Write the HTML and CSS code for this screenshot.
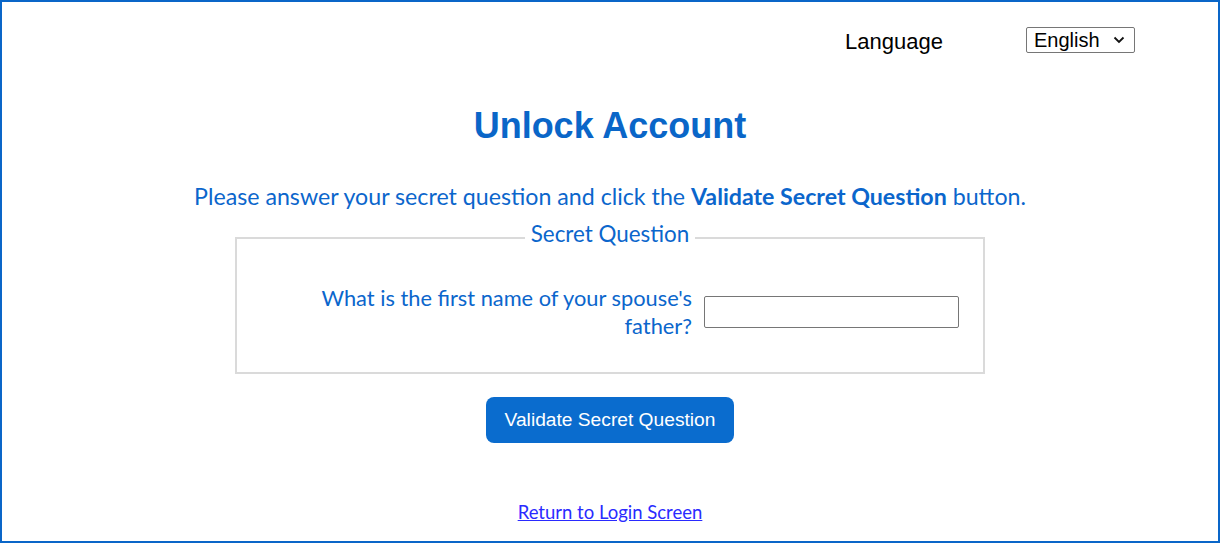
FILE: index.html
```html
<!DOCTYPE html>
<html>
<head>
<meta charset="utf-8">
<link rel="stylesheet" href="styles.css">
</head>
<body>
<div class="page">
  <div class="lang-row">
    <span class="lang-label">Language</span>
    <div class="select-wrap">
      <select class="lang-select"><option>English</option></select>
      <svg class="chev" width="12" height="8" viewBox="0 0 12 8"><path d="M1.5 1.5 L6 6 L10.5 1.5" fill="none" stroke="#111" stroke-width="1.8"/></svg>
    </div>
  </div>
  <h1 class="title">Unlock Account</h1>
  <p class="intro">Please answer your secret question and click the <b>Validate Secret Question</b> button.</p>
  <fieldset class="sq">
    <legend class="sq-legend">Secret Question</legend>
    <div class="sq-row">
      <label class="sq-label" for="ans">What is the first name of your spouse's father?</label>
      <input id="ans" class="sq-input" type="text">
    </div>
  </fieldset>
  <div class="btn-row"><button class="btn">Validate Secret Question</button></div>
  <div class="link-row"><a class="back" href="#">Return to Login Screen</a></div>
</div>
</body>
</html>
```
FILE: styles.css
```css
html, body { margin: 0; padding: 0; background: #fff; }
.page {
  box-sizing: border-box;
  width: 1220px;
  height: 543px;
  border: 2px solid #0a66c8;
  font-family: Lato, "Open Sans", sans-serif;
  color: #0b66cc;
  overflow: hidden;
}
.lang-row {
  display: flex;
  justify-content: flex-end;
  align-items: flex-start;
  gap: 83px;
  padding: 25px 83px 0 0;
  height: 26px;
}
.lang-label {
  font-family: "Liberation Sans", Arial, sans-serif;
  font-size: 22px;
  line-height: 26px;
  color: #000;
  margin-top: 2px;
}
.select-wrap { position: relative; width: 109px; height: 26px; }
.lang-select {
  -webkit-appearance: none;
  appearance: none;
  box-sizing: border-box;
  width: 109px;
  height: 26px;
  border: 1px solid #767676;
  border-radius: 2px;
  background: #fff;
  font-family: "Liberation Sans", Arial, sans-serif;
  font-size: 20px;
  color: #000;
  padding: 0 0 0 7px;
  margin: 0;
}
.chev { position: absolute; right: 10px; top: 9px; pointer-events: none; }
.title {
  margin: 55px 0 0;
  text-align: center;
  font-family: "Liberation Sans", Arial, sans-serif;
  font-weight: bold;
  font-size: 36px;
  line-height: 36px;
  color: #0a66c8;
}
.intro {
  margin: 38px 0 0;
  text-align: center;
  font-size: 23.2px;
  line-height: 28px;
}
.intro b { font-weight: bold; }
.sq {
  box-sizing: border-box;
  width: 750px;
  margin: 12px auto 0;
  border: 2px solid #dadada;
  padding: 31px 24px 32px 24px;
}
.sq-legend {
  margin: 0 auto;
  padding: 0 6px 7px;
  font-size: 22.4px;
  line-height: 24px;
}
.sq-row { display: flex; justify-content: flex-end; align-items: center; }
.sq-label {
  width: 420px;
  text-align: right;
  font-size: 21.8px;
  line-height: 28px;
  margin-right: 12px;
}
.sq-input {
  box-sizing: border-box;
  width: 255px;
  height: 32px;
  border: 1px solid #767676;
  border-radius: 2px;
  margin: 0;
}
.btn-row { display: flex; justify-content: center; margin-top: 23px; }
.btn {
  height: 46px;
  width: 248px;
  border: none;
  border-radius: 8px;
  background: #0a6cce;
  color: #fff;
  font-family: "Liberation Sans", Arial, sans-serif;
  font-size: 19.2px;
  padding: 0;
}
.link-row { text-align: center; margin-top: 55px; font-size: 18.5px; line-height: 28px; }
.back { color: #2a2aff; text-decoration: underline; }
```
